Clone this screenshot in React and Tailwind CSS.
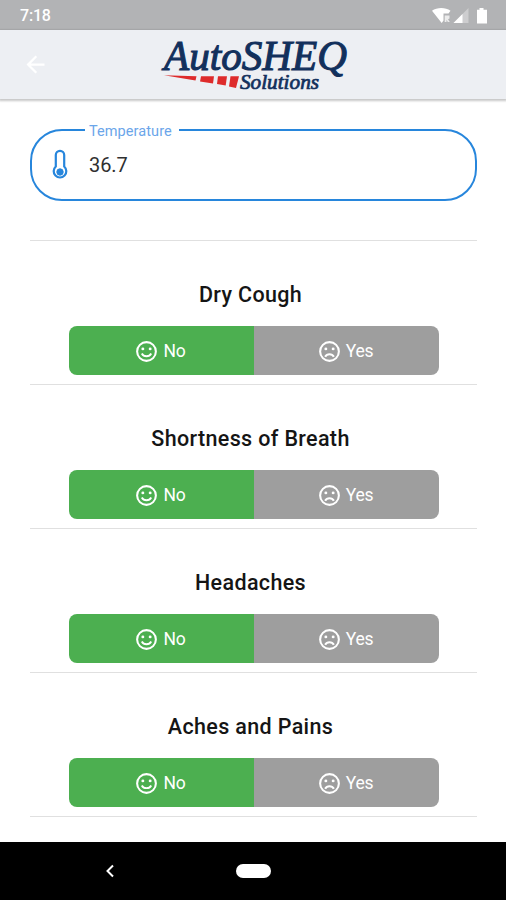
import React, { useState } from "react";

const symptoms = ["Dry Cough", "Shortness of Breath", "Headaches", "Aches and Pains"];

const HappyIcon = () => (
    <svg viewBox="0 0 24 24" className="size-[25px]" fill="none" stroke="currentColor" strokeWidth="2">
        <circle cx="12" cy="12" r="9" />
        <circle cx="8.5" cy="9.5" r="1.4" fill="currentColor" stroke="none" />
        <circle cx="15.5" cy="9.5" r="1.4" fill="currentColor" stroke="none" />
        <path d="M7.5 13.9C8.4 15.6 10.1 16.5 12 16.5s3.6-.9 4.5-2.6" strokeWidth="1.8" />
    </svg>
);

const SadIcon = () => (
    <svg viewBox="0 0 24 24" className="size-[25px]" fill="none" stroke="currentColor" strokeWidth="2">
        <circle cx="12" cy="12" r="9" />
        <circle cx="8.5" cy="9.5" r="1.4" fill="currentColor" stroke="none" />
        <circle cx="15.5" cy="9.5" r="1.4" fill="currentColor" stroke="none" />
        <path d="M7.8 17C8.7 15.4 10.2 14.6 12 14.6s3.3.8 4.2 2.4" strokeWidth="2" />
    </svg>
);

const Logo = () => (
    <svg viewBox="0 0 190 56" className="h-[56px] w-[190px] overflow-visible">
        <g fontFamily="'Liberation Serif', serif" fontStyle="italic" fill="#12305c" stroke="#12305c">
            <text x="6" y="33.3" fontSize="42.5" textLength="183" lengthAdjust="spacingAndGlyphs" strokeWidth="1.1">AutoSHEQ</text>
            <text x="82" y="51.8" fontSize="20" textLength="79" lengthAdjust="spacingAndGlyphs" strokeWidth="0.7">Solutions</text>
        </g>
        <g fill="#de2b2b">
            <path d="M6 38.3L38.5 39.3L37.5 43.5Z" />
            <path d="M43 39.3H56L55 46.5L42 44.5Z" />
            <path d="M60 39.3H69L67.7 48.5L59 47Z" />
            <path d="M72.5 39.3H81L78 51L71 49.5Z" />
        </g>
    </svg>
);

const StatusBar = () => (
    <div className="flex h-[30px] items-center justify-between bg-[#b2b3b5] pl-[20px] pr-[17px] text-white">
        <span className="pt-[2px] text-[16px] font-medium leading-none tracking-[-0.2px]">7:18</span>
        <svg viewBox="0 0 58 18" className="h-[18px] w-[58px]" fill="currentColor">
            <path d="M1 4.700C6 1 14.500 1 19.500 4.700L17.500 7.500H12.500V14.500L10.700 17Z" />
            <path d="M13.700 9.500H18.500V12.500L17 13.200L18.800 16H16.800L15.500 13.800V16H13.700Z" opacity=".75" />
            <path d="M22.500 17L37.500 2V17Z" opacity=".35" />
            <path d="M22.500 17L31.500 8V17Z" />
            <path d="M46 3.700H48.500V2H52.500V3.700H56V17.500H46Z" />
        </svg>
    </div>
);

const Header = () => (
    <header className="flex h-[69px] shrink-0 items-center bg-[#edeff3] shadow-[0_1px_2px_1px_rgba(0,0,0,0.22)]">
        <button className="ml-[22px] w-[26px] text-white" aria-label="Back">
            <svg viewBox="0 0 24 24" className="size-[27px]" fill="currentColor">
                <path d="M20 11H7.830l5.590-5.590L12 4l-8 8 8 8 1.410-1.410L7.830 13H20v-2z" />
            </svg>
        </button>
        <div className="ml-[110px]">
            <Logo />
        </div>
    </header>
);

const TemperatureField = () => (
    <fieldset className="flex h-[80px] rounded-[32px] border-2 border-[#2786dc] pl-[19px]">
        <legend className="ml-[34px] h-[17px] pl-[4px] pr-[7px] text-[14.5px] leading-[21px] tracking-[0.08px] text-[#6ba6ea]">
            Temperature
        </legend>
        <div className="flex h-[54px] items-center">
            <svg viewBox="0 0 18 32" className="h-[32px] w-[18px]" fill="none" stroke="#2786dc">
                <path d="M4.800 17.500V6a4.200 4.200 0 0 1 8.400 0v11.500a6.300 6.300 0 1 1-8.400 0z" strokeWidth="2.200" />
                <circle cx="9" cy="23" r="3.200" fill="#2786dc" />
            </svg>
            <span className="ml-[20px] text-[20px] tracking-[-0.1px] text-[#303030]">36.7</span>
        </div>
    </fieldset>
);

const SymptomRow = ({ name }) => {
    const [hasSymptom, setHasSymptom] = useState(false);

    return (
        <section className="h-[144px] border-b border-[#e0e0e0] pl-[39px] pr-[38px] pt-[40px]">
            <h2 className="pr-[7px] text-center text-[21.500px] font-medium leading-[28px] tracking-[0.35px] text-[#151515]">{name}</h2>
            <div className="mt-[17px] flex h-[49px] overflow-hidden rounded-[8px] text-[17.500px] text-white">
                <button
                    onClick={() => setHasSymptom(false)}
                    className={`flex w-1/2 items-center justify-center gap-[4px] pr-[3px] pt-[2px] ${hasSymptom ? "bg-[#9e9e9e]" : "bg-[#4caf50]"}`}
                >
                    <HappyIcon />
                    <span className="tracking-[-0.2px]">No</span>
                </button>
                <button
                    onClick={() => setHasSymptom(true)}
                    className={`flex w-1/2 items-center justify-center gap-[4px] pr-[3px] pt-[2px] ${hasSymptom ? "bg-[#f44336]" : "bg-[#9e9e9e]"}`}
                >
                    <SadIcon />
                    <span className="tracking-[-0.2px]">Yes</span>
                </button>
            </div>
        </section>
    );
};

const NavBar = () => (
    <div className="flex h-[58px] shrink-0 items-center bg-black">
        <svg viewBox="0 0 10 16" className="ml-[105px] h-[16px] w-[10px]" fill="none" stroke="#fff" strokeWidth="2">
            <path d="M8 2.500L2.500 8L8 13.500" />
        </svg>
        <div className="ml-[121px] h-[14px] w-[35px] rounded-full bg-white" />
    </div>
);

const App = () => {
    return (
        <div className="flex h-[900px] w-[506px] flex-col overflow-hidden bg-white font-['Roboto',sans-serif]">
            <StatusBar />
            <Header />
            <main className="flex-1 overflow-hidden pl-[30px] pr-[29px] pt-[22px]">
                <div className="h-[120px] border-b border-[#e0e0e0]">
                    <TemperatureField />
                </div>
                {symptoms.map((name) => (
                    <SymptomRow key={name} name={name} />
                ))}
            </main>
            <NavBar />
        </div>
    );
};

export default App;
